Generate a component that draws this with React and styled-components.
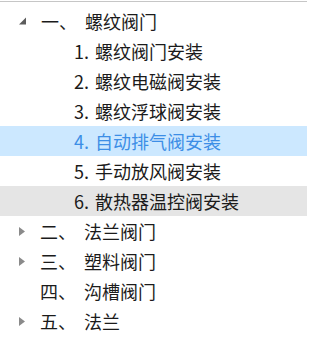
import React from "react";
import styled, { createGlobalStyle } from "styled-components";

const Global = createGlobalStyle`
  html, body { margin: 0; padding: 0; background: #fff; }
  body { font-family: "Noto Sans CJK SC", "Noto Sans", sans-serif; }
`;

const Tree = styled.div`
  width: 307px;
  height: 339px;
  box-sizing: border-box;
  margin-top: 1px;
  border-top: 1px solid #c6c6c6;
  padding-top: 4px;
  overflow: hidden;
`;

const Row = styled.div`
  display: flex;
  align-items: center;
  height: 30px;
  padding-left: ${(p) => p.$indent}px;
  background: ${(p) => (p.$selected ? "#cce8ff" : p.$hover ? "#e5e5e5" : "transparent")};
  color: ${(p) => (p.$selected ? "#3c8ee6" : "#1b1b1b")};
  font-size: 18px;
  line-height: 30px;
  white-space: nowrap;
  word-spacing: 2px;
`;

const Toggle = styled.span`
  width: 24px;
  height: 30px;
  display: flex;
  align-items: center;
  justify-content: center;
  flex: none;
  margin-left: ${(p) => p.$left}px;
  margin-right: 6px;
`;

const Num = styled.span`
  margin-right: 8px;
`;

const ExpandedIcon = () => (
  <svg width="8" height="8" viewBox="0 0 8 8">
    <polygon points="7,0.5 7,7.5 0,7.5" fill="#5c5c5c" />
  </svg>
);

const CollapsedIcon = () => (
  <svg width="6" height="9" viewBox="0 0 6 9">
    <polygon points="0,0 6,4.5 0,9" fill="#8a8a8a" />
  </svg>
);

const children = [
  "1. 螺纹阀门安装",
  "2. 螺纹电磁阀安装",
  "3. 螺纹浮球阀安装",
  "4. 自动排气阀安装",
  "5. 手动放风阀安装",
  "6. 散热器温控阀安装",
];

const groups = [
  { num: "二、", name: "法兰阀门", hasChildren: true },
  { num: "三、", name: "塑料阀门", hasChildren: true },
  { num: "四、", name: "沟槽阀门", hasChildren: false },
  { num: "五、", name: "法兰", hasChildren: true },
];

export default function App() {
  return (
    <>
      <Global />
      <Tree>
        <Row $indent={0}>
          <Toggle $left={11}>
            <ExpandedIcon />
          </Toggle>
          <Num>一、</Num>
          <span>螺纹阀门</span>
        </Row>
        {children.map((c, i) => (
          <Row key={c} $indent={74} $selected={i === 3} $hover={i === 5}>
            {c}
          </Row>
        ))}
        {groups.map((g) => (
          <Row key={g.num} $indent={0}>
            <Toggle $left={10}>{g.hasChildren && <CollapsedIcon />}</Toggle>
            <Num>{g.num}</Num>
            <span>{g.name}</span>
          </Row>
        ))}
      </Tree>
    </>
  );
}
